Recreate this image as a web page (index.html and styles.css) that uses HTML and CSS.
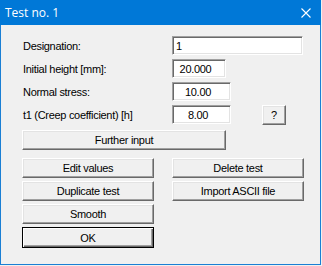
FILE: index.html
```html
<!DOCTYPE html>
<html lang="en">

<head>
    <meta charset="UTF-8">
    <title>Test no. 1</title>
    <link rel="stylesheet" href="styles.css">
</head>

<body>

    <div class="window">
        <!-- Title bar -->
        <div class="titlebar">
            <span class="title">Test no. 1</span>
            <svg class="close" width="10" height="10" viewBox="0 0 10 10">
                <path d="M0.5 0.5 L9.5 9.5 M9.5 0.5 L0.5 9.5" stroke="#fff" stroke-width="1.1" fill="none" />
            </svg>
        </div>

        <!-- Content -->
        <div class="content">
            <div class="form">
                <label class="label">Designation:</label>
                <input class="field field-wide field-left" value="1">

                <label class="label">Initial height [mm]:</label>
                <input class="field field-short" value="20.000">

                <label class="label">Normal stress:</label>
                <input class="field" value="10.00">

                <label class="label">t1 (Creep coefficient) [h]</label>
                <div class="field-row">
                    <input class="field" value="8.00">
                    <button class="btn btn-help">?</button>
                </div>
            </div>

            <button class="btn btn-further">Further input</button>

            <div class="actions">
                <button class="btn">Edit values</button>
                <button class="btn">Delete test</button>
                <button class="btn">Duplicate test</button>
                <button class="btn">Import ASCII file</button>
                <button class="btn">Smooth</button>
                <div></div>
                <button class="btn btn-default">OK</button>
            </div>
        </div>
    </div>

</body>

</html>
```

FILE: styles.css
```css
/* General */
body {
    margin: 0;
    background-color: #f0f0f0;
    font-family: "Liberation Sans", Arial, sans-serif;
    font-size: 11px;
    letter-spacing: -0.3px;
    color: #000;
}

.window {
    width: 321px;
    height: 265px;
    box-sizing: border-box;
    border: 1px solid #1a7fd4;
    border-top: none;
    background-color: #f0f0f0;
}

/* Title bar */
.titlebar {
    height: 25px;
    margin: 0 -1px;
    background-color: #0078d7;
    color: white;
    display: flex;
    align-items: center;
    justify-content: space-between;
    padding: 0 10px 0 5px;
    letter-spacing: 0;
}

.title {
    font-family: "Open Sans", "Noto Sans", sans-serif;
    font-size: 12px;
    padding-bottom: 1px;
}

/* Content */
.content {
    padding: 11px 16px 0 21px;
}

.form {
    display: grid;
    grid-template-columns: 150px 1fr;
    row-gap: 4px;
    align-items: center;
}

.label {
    padding-left: 1px;
}

.field-row {
    display: flex;
    align-items: flex-start;
    gap: 31px;
}

/* Sunken edit box */
.field {
    width: 59px;
    height: 19px;
    box-sizing: border-box;
    margin: 0;
    padding: 0 7px 0 0;
    border: 1px solid;
    border-color: #a0a0a0 #fff #fff #a0a0a0;
    box-shadow: inset 1px 1px #696969, inset -1px -1px #e3e3e3;
    background-color: #fff;
    font-family: inherit;
    font-size: 11px;
    letter-spacing: inherit;
    text-align: center;
    outline: none;
}

.field-wide {
    width: 131px;
}

.field-short {
    width: 54px;
}

.field-left {
    text-align: left;
    padding: 0 0 0 3px;
}

/* Raised button */
.btn {
    height: 20px;
    box-sizing: border-box;
    margin: 0;
    padding: 0;
    border: 1px solid;
    border-color: #fff #696969 #696969 #fff;
    box-shadow: inset -1px -1px #a0a0a0, inset 1px 1px #e3e3e3;
    background-color: #f0f0f0;
    font-family: inherit;
    font-size: 11px;
    letter-spacing: inherit;
    color: #000;
}

.btn-help {
    width: 24px;
}

.btn-further {
    display: block;
    width: 204px;
    margin-top: 5px;
}

.actions {
    display: grid;
    grid-template-columns: 132px 132px;
    column-gap: 18px;
    row-gap: 3px;
    margin-top: 8px;
}

.btn-default {
    height: 21px;
    border: 1px solid #000;
    box-shadow: inset 1px 1px #fff, inset -1px -1px #696969, inset -2px -2px #a0a0a0;
}
```
